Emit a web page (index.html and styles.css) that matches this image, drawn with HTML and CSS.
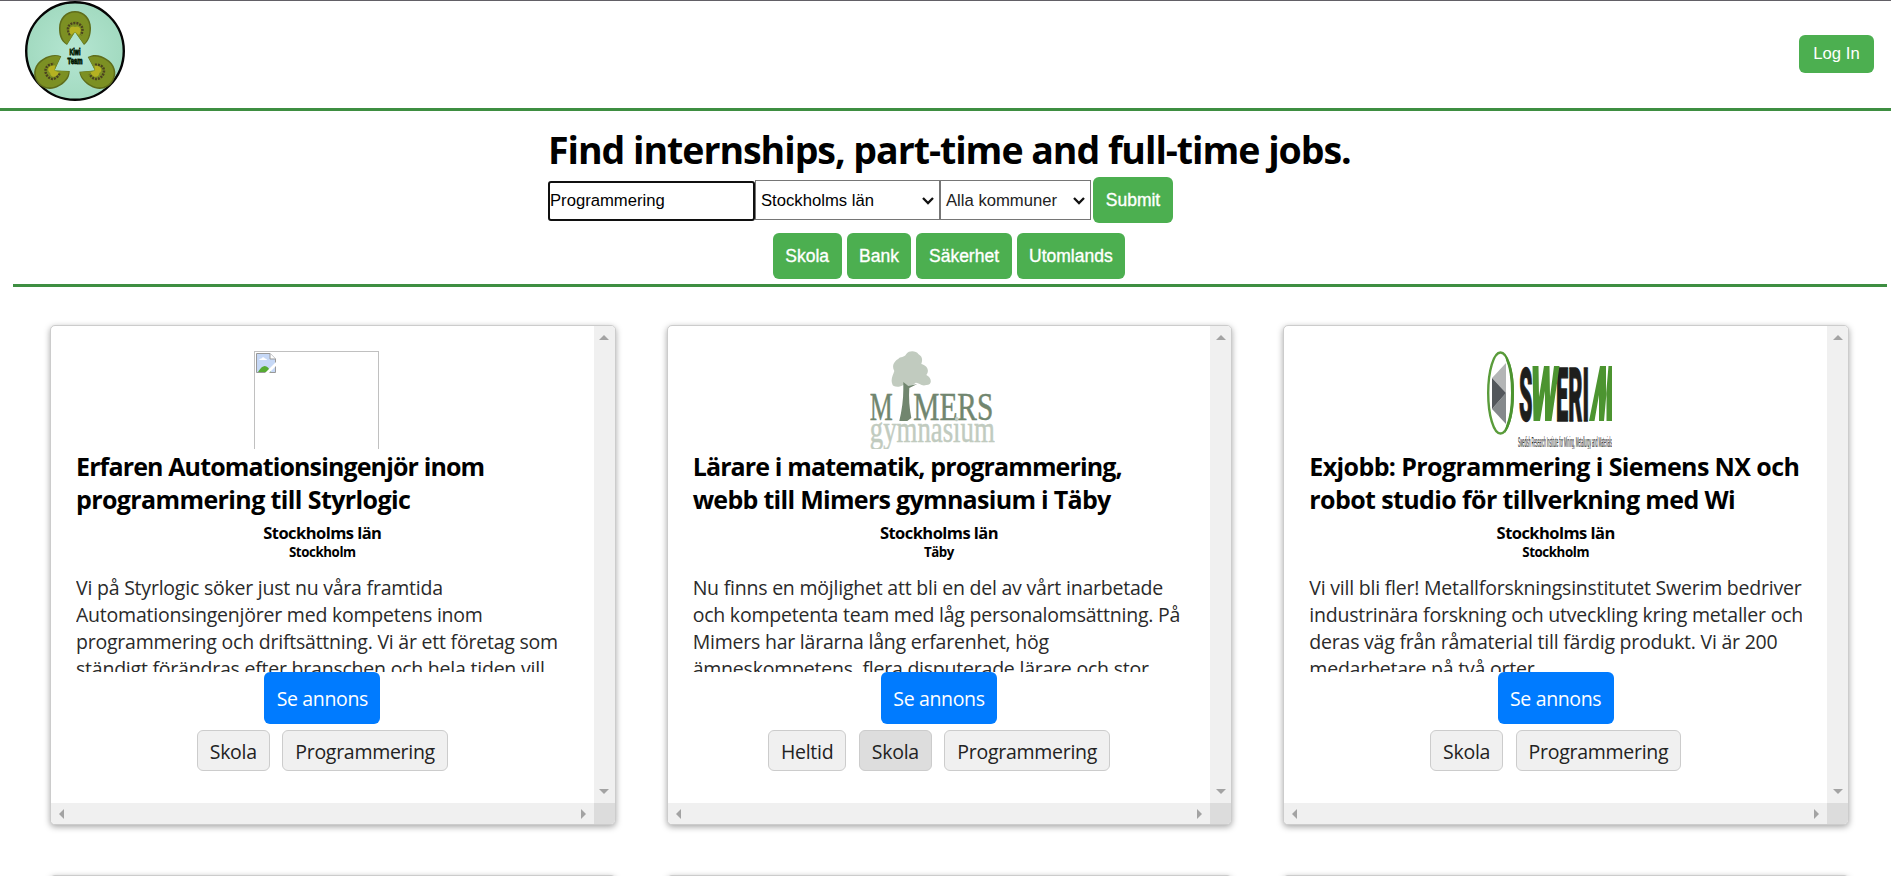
FILE: index.html
```html
<!DOCTYPE html>
<html lang="sv">
<head>
<meta charset="utf-8">
<title>Kiwi Team</title>
<link rel="stylesheet" href="styles.css">
</head>
<body>
<svg width="0" height="0" class="defs" aria-hidden="true">
  <defs>
    <g id="kiwi">
      <path d="M0 0 L-8 13 C-15 9 -16 2 -16 -4 C-16 -14 -9 -21 0 -21 C9 -21 16 -14 16 -4 C16 3 14 9 9 13 Z" fill="#5f6d1b"/>
      <path d="M0 0 L-8 12 C-13 8 -14.500 2 -14.500 -4 C-14.500 -13 -8 -19.500 0 -19.500 C8 -19.500 14.500 -13 14.500 -4 C14.500 3 13 8 9 12 Z" fill="#7c9023"/>
      <path d="M-5 3 C-10 -5 -5 -9 0 -9 C5 -9 10 -5 6 3" fill="none" stroke="#4c4220" stroke-width="2.500" stroke-dasharray="2 1"/>
      <path d="M0 0 L-4 3 C-8 -4 -3 -7 0 -5 C4 -7 8 -3 4 3 Z" fill="#b5b122"/>
    </g>
  </defs>
</svg>

<header class="header">
  <svg class="brand" width="100" height="100" viewBox="0 0 100 100">
    <defs><radialGradient id="mint"><stop offset="0" stop-color="#b5e6d2"/><stop offset="1" stop-color="#a2dac0"/></radialGradient></defs>
    <circle cx="50" cy="50" r="48.8" fill="url(#mint)" stroke="#050505" stroke-width="2.4"/>
    <use href="#kiwi" transform="translate(50 31)"/>
    <use href="#kiwi" transform="translate(29.500 69.500) rotate(-120)"/>
    <use href="#kiwi" transform="translate(70 69.500) rotate(120)"/>
    <g class="brand-text"><text x="50" y="54" textLength="11" lengthAdjust="spacingAndGlyphs">Kiwi</text><text x="50" y="63" textLength="15" lengthAdjust="spacingAndGlyphs">Team</text></g>
  </svg>
  <button class="login">Log In</button>
</header>

<section class="search">
  <div class="search-inner">
    <h1 class="headline">Find internships, part-time and full-time jobs.</h1>
    <div class="form">
      <div class="field query">Programmering</div>
      <div class="field select region">Stockholms län<svg width="12" height="8" viewBox="0 0 12 8"><path d="M1 1l5 5 5-5"/></svg></div>
      <div class="field select town">Alla kommuner<svg width="12" height="8" viewBox="0 0 12 8"><path d="M1 1l5 5 5-5"/></svg></div>
      <button class="btn submit">Submit</button>
    </div>
    <div class="quick">
      <button class="btn">Skola</button><button class="btn">Bank</button><button class="btn">Säkerhet</button><button class="btn">Utomlands</button>
    </div>
  </div>
</section>

<main class="cards">
  <article class="card">
    <div class="content">
      <div class="picture"><div class="broken"><svg width="20" height="20" viewBox="0 0 20 20"><path d="M.5.5H14L19.500 6V19.500H.5Z" fill="#c6d8f6" stroke="#999"/><path d="M14 .5V6h5.500" fill="#fff" stroke="#999"/><path d="M3 7q1-2 2.500-1.500Q7 3 9 5.500q2 0 2 1.500z" fill="#fff"/><path d="M2 19q7-12 13 0z" fill="#56ab32"/><path d="M9 20L20 9v4l-7 7z" fill="#fff"/></svg></div></div>
      <h2 class="title"><span class="tight">Erfaren Automationsingenjör inom</span><br><span>programmering till Styrlogic</span></h2>
      <h4 class="county">Stockholms län</h4>
      <h5 class="city">Stockholm</h5>
      <p class="text">Vi på Styrlogic söker just nu våra framtida<br>Automationsingenjörer med kompetens inom<br>programmering och driftsättning. Vi är ett företag som<br>ständigt förändras efter branschen och hela tiden vill</p>
      <button class="open">Se annons</button>
      <div class="tags"><span class="tag">Skola</span><span class="tag">Programmering</span></div>
    </div>
    <div class="vbar"><i class="up"></i><i class="down"></i></div>
    <div class="hbar"><i class="left"></i><i class="right"></i></div>
    <div class="corner"></div>
  </article>
  <article class="card">
    <div class="content">
      <div class="picture"><svg width="126" height="98" viewBox="0.700 0 126 98">
        <path d="M34 34C30 37 23 36 23 33C21 28 24 24 25 20C22 15 25 10 29 8C31 5 35 7 37 3C40-1 47 0 49 3C54 6 53 10 52 13C59 15 60 20 57 24C63 27 63 34 57 34C52 36 49 31 46 32C42 36 38 35 34 34Z" fill="#c1cbbf"/>
        <path d="M34 31l5 4 9-2-8 4q-1 14 2 30l-4 3h-8q4-17 4-31z" fill="#71866f"/>
        <g class="mimers"><text x="0.500" y="68.500" textLength="23" lengthAdjust="spacingAndGlyphs">M</text><text x="44" y="68.500" textLength="80" lengthAdjust="spacingAndGlyphs">MERS</text></g>
        <text class="gymnasium" x="0.500" y="90.500" textLength="125" lengthAdjust="spacingAndGlyphs">gymnasium</text>
      </svg></div>
      <h2 class="title"><span class="tight">Lärare i matematik, programmering,</span><br><span class="snug">webb till Mimers gymnasium i Täby</span></h2>
      <h4 class="county">Stockholms län</h4>
      <h5 class="city">Täby</h5>
      <p class="text">Nu finns en möjlighet att bli en del av vårt inarbetade<br>och kompetenta team med låg personalomsättning. På<br>Mimers har lärarna lång erfarenhet, hög<br>ämneskompetens, flera disputerade lärare och stor</p>
      <button class="open">Se annons</button>
      <div class="tags"><span class="tag">Heltid</span><span class="tag active">Skola</span><span class="tag">Programmering</span></div>
    </div>
    <div class="vbar"><i class="up"></i><i class="down"></i></div>
    <div class="hbar"><i class="left"></i><i class="right"></i></div>
    <div class="corner"></div>
  </article>
  <article class="card">
    <div class="content">
      <div class="picture"><svg width="126" height="98" viewBox="0 0 126 98">
        <ellipse cx="13.500" cy="42" rx="12.300" ry="40.500" fill="#fff" stroke="#5a9c3b" stroke-width="2.400"/>
        <path d="M18 3Q27 15 27 42T18 82L19 75Q24 63 24 42T19 9Z" fill="#4c9430"/>
        <path d="M19 12V42L5 27Z" fill="#b3b5b6"/><path d="M19 42V73L5 58Z" fill="#85898c"/><path d="M5 27L19 42 5 58Z" fill="#53575c"/>
        <g class="swerim"><text x="32" y="69.500" textLength="13.500" lengthAdjust="spacingAndGlyphs">S</text><text x="69" y="69.500" textLength="33" lengthAdjust="spacingAndGlyphs">ERI</text></g>
        <path d="M45.500 15h6l.5 31 5-31h5.500l.5 31 4-31h5.500L64.500 70h-6.500V40l-5 30h-6.500z" fill="#4c9430"/>
        <path d="M102 70l11-55h6v29l2.500-29h4v55h-6V42l-2.500 28h-5V44l-4.500 26z" fill="#4c9430"/>
        <text class="tagline" x="31" y="96" textLength="94" lengthAdjust="spacingAndGlyphs">Swedish Research Institute for Mining, Metallurgy and Materials</text>
      </svg></div>
      <h2 class="title"><span>Exjobb: Programmering i Siemens NX och</span><br><span>robot studio för tillverkning med Wi</span></h2>
      <h4 class="county">Stockholms län</h4>
      <h5 class="city">Stockholm</h5>
      <p class="text">Vi vill bli fler! Metallforskningsinstitutet Swerim bedriver<br>industrinära forskning och utveckling kring metaller och<br>deras väg från råmaterial till färdig produkt. Vi är 200<br>medarbetare på två orter</p>
      <button class="open">Se annons</button>
      <div class="tags"><span class="tag">Skola</span><span class="tag">Programmering</span></div>
    </div>
    <div class="vbar"><i class="up"></i><i class="down"></i></div>
    <div class="hbar"><i class="left"></i><i class="right"></i></div>
    <div class="corner"></div>
  </article>
  <article class="card"></article>
  <article class="card"></article>
  <article class="card"></article>
</main>
</body>
</html>
```
FILE: styles.css
```css
* { box-sizing: border-box; }
html, body { height: 876px; overflow: hidden; }
body { margin: 0; background: #fff; color: #000; font-family: "Open Sans", "Noto Sans", sans-serif; }
h1, h2, h4, h5, p { margin: 0; white-space: nowrap; }
button { border: 0; padding: 0; font-family: "Liberation Sans", Arial, sans-serif; color: #fff; }
.defs { display: block; height: 0; }

.header { height: 111px; padding: 0 17px 0 25px; display: flex; justify-content: space-between; align-items: flex-start; border-top: 1px solid #626066; border-bottom: 3px solid #3e8e41; }
.brand { display: block; }
.brand-text { font: bold 8.500px "Liberation Sans", sans-serif; text-anchor: middle; fill: #074a07; stroke: #031503; stroke-width: .8px; }
.login { width: 75px; height: 38px; margin-top: 34px; background: #4caf50; border-radius: 6px; font-size: 16.670px; }

.search { height: 176px; margin: 0 4px 0 13px; border-bottom: 3px solid #3e8e41; }
.search-inner { width: 802px; margin-left: 535px; padding-top: 15px; }
.headline { height: 51px; font-size: 37.500px; line-height: 47px; font-weight: 700; letter-spacing: -1.030px; }
.form { display: flex; align-items: center; height: 46px; }
.field { height: 40px; display: flex; align-items: center; font: 16.670px "Liberation Sans", Arial, sans-serif; background: #fff; }
.query { width: 207px; height: 40px; margin-top: 1px; border: 2px solid #101010; border-radius: 3px; }
.select { border: 1px solid #767676; padding: 1px 5px 0; justify-content: space-between; }
.select svg { fill: none; stroke: #111; stroke-width: 2.300; }
.region { width: 185px; }
.town { width: 151px; color: #222; }
.btn { height: 46px; padding: 0 12.500px; background: #4caf50; border-radius: 6px; font-size: 17.500px; -webkit-text-stroke: .35px #fff; }
.submit { width: 80px; margin-left: 2px; }
.quick { display: flex; justify-content: center; gap: 5px; margin-top: 10px; }

.cards { height: 589px; overflow: hidden; padding: 38px 42px 0 50px; display: grid; grid-template-columns: repeat(3, 1fr); column-gap: 51px; row-gap: 50px; }
.card { height: 500px; display: grid; grid-template-columns: 1fr 21px; grid-template-rows: 1fr 21px; border: 1px solid #ccc; border-radius: 5px; overflow: hidden; box-shadow: 0 2px 6px rgba(0, 0, 0, .35); background: #fff; }
.content { padding: 25px; min-width: 0; display: flex; flex-direction: column; align-items: center; }
.picture { width: 125px; height: 98px; margin-right: 12px; overflow: hidden; flex: none; }
.picture svg { display: block; }
.broken { height: 125px; padding: 1px; border: 1px solid #c0c0c0; }
.title { align-self: flex-start; font-size: 25px; line-height: 33px; height: 66px; margin-top: 1px; font-weight: 700; letter-spacing: -.61px; }
.tight { letter-spacing: -.87px; }
.snug { letter-spacing: -.7px; }
.county { margin-top: 7px; height: 20px; line-height: 20px; font-size: 16.500px; letter-spacing: -.55px; }
.city { height: 17px; line-height: 17px; font-size: 13.300px; letter-spacing: -.42px; margin-top: 1px; }
.text { align-self: stretch; height: 98px; margin-top: 13px; overflow: hidden; font-size: 19.500px; line-height: 27px; color: #2a2a2a; letter-spacing: -.22px; }
.open { width: 116px; height: 52px; flex: none; border-radius: 6px; background: #007bff; font: 500 19.500px "Open Sans", sans-serif; letter-spacing: -.35px; }
.tags { display: flex; gap: 12.500px; margin-top: 6px; }
.tag { height: 41px; padding: 0 12px; line-height: 41px; border: 1px solid #ccc; border-radius: 6px; background: #f0f0f0; font-size: 19.500px; color: #222; letter-spacing: -.28px; }
.tag.active { background: #ddd; }

.vbar, .hbar { background: #f0f0f0; display: flex; justify-content: space-between; align-items: center; }
.vbar { flex-direction: column; padding: 9px 0; }
.hbar { padding: 0 8px; }
.corner { background: #dcdcdc; }
.up, .down { border: 0 solid transparent; border-width: 0 5px 5px; border-bottom-color: #a3a3a3; }
.down { border-width: 5px 5px 0; border-top-color: #a3a3a3; }
.left, .right { border: 0 solid transparent; border-width: 5px 5px 5px 0; border-right-color: #a3a3a3; }
.right { border-width: 5px 0 5px 5px; border-left-color: #a3a3a3; }

.mimers { font: 41px "Liberation Serif", serif; fill: #71866f; stroke: #71866f; stroke-width: .5px; }
.gymnasium { font: 37px "Liberation Serif", serif; fill: #c1cbbf; stroke: #c1cbbf; stroke-width: .5px; }
.swerim { font: 900 75px Roboto, sans-serif; fill: #1e1e1c; stroke: #1e1e1c; stroke-width: 1.300px; }
.tagline { font: 14.500px "Liberation Sans", sans-serif; fill: #333; stroke: #333; stroke-width: .2px; }
```
